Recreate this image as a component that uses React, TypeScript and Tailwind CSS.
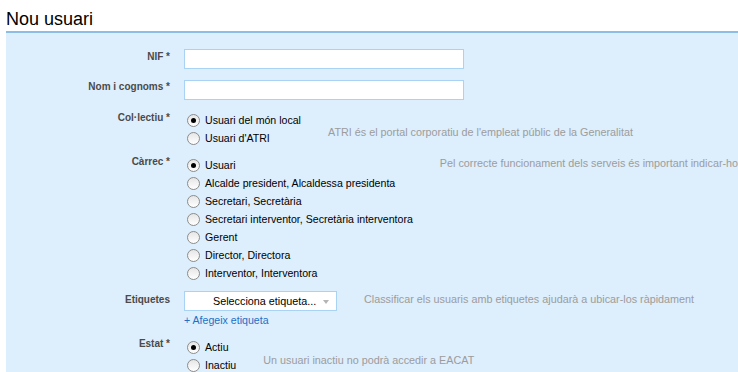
import React from 'react';

type Option = { label: string; checked?: boolean };

function Radio({ label, checked }: Option) {
  return (
    <div className="flex h-[18px] items-center whitespace-nowrap">
      <span className="ml-[3px] flex h-[13px] w-[13px] items-center justify-center rounded-full border border-[#8c8c8c] bg-gradient-to-b from-[#e6e6e6] to-white">
        {checked && <span className="h-[5px] w-[5px] rounded-full bg-black" />}
      </span>
      <span className="ml-[5px] text-[10.6px] leading-[14px] text-black">{label}</span>
    </div>
  );
}

function Label({ text, pad }: { text: string; pad: string }) {
  return (
    <div className={`w-[164px] shrink-0 text-right text-[10px] font-bold leading-[12px] text-[#4a4a4a] ${pad}`}>
      {text}
    </div>
  );
}

function Help({ text, mt }: { text: string; mt: string }) {
  return (
    <div className={`ml-[27px] whitespace-nowrap text-[10.8px] leading-[14px] text-[#9c9c9c] ${mt}`}>{text}</div>
  );
}

export default function App() {
  const carrecs: Option[] = [
    { label: 'Usuari', checked: true },
    { label: 'Alcalde president, Alcaldessa presidenta' },
    { label: 'Secretari, Secretària' },
    { label: 'Secretari interventor, Secretària interventora' },
    { label: 'Gerent' },
    { label: 'Director, Directora' },
    { label: 'Interventor, Interventora' },
  ];

  return (
    <div className="h-[372px] w-[738px] overflow-hidden bg-white font-['Liberation_Sans',Arial,sans-serif]">
      <h1 className="h-[31px] pl-[6px] pt-[9px] text-[18px] font-normal leading-[20px] text-black">Nou usuari</h1>

      <div className="ml-[6px] h-[341px] overflow-hidden border-t-2 border-[#8dbde5] bg-[#ddeefd] pt-[16px]">
        {/* NIF */}
        <div className="flex gap-[14px]">
          <Label text="NIF *" pad="pt-[2px]" />
          <div className="h-[20px] w-[280px] border border-[#a9d3f4] bg-white" />
        </div>

        {/* Nom */}
        <div className="mt-[11px] flex gap-[14px]">
          <Label text="Nom i cognoms *" pad="pt-[1px]" />
          <div className="h-[20px] w-[280px] border border-[#a9d3f4] bg-white" />
        </div>

        {/* Col·lectiu */}
        <div className="mt-[11px] flex">
          <Label text="Col·lectiu *" pad="pt-[1px]" />
          <div className="ml-[14px] flex flex-col">
            <Radio label="Usuari del món local" checked />
            <Radio label="Usuari d'ATRI" />
          </div>
          <Help text="ATRI és el portal corporatiu de l'empleat públic de la Generalitat" mt="mt-[14px]" />
        </div>

        {/* Càrrec */}
        <div className="mt-[9px] flex">
          <Label text="Càrrec *" pad="pt-0" />
          <div className="ml-[14px] flex flex-col">
            {carrecs.map((c) => (
              <Radio key={c.label} label={c.label} checked={c.checked} />
            ))}
          </div>
          <Help text="Pel correcte funcionament dels serveis és important indicar-ho i" mt="mt-0" />
        </div>

        {/* Etiquetes */}
        <div className="mt-[9px] flex">
          <Label text="Etiquetes" pad="pt-[3px]" />
          <div className="ml-[14px] flex flex-col">
            <div className="relative flex h-[20px] w-[153px] items-center border border-[#a9d3f4] bg-white pl-[28px]">
              <span className="text-[10.8px] leading-[14px] text-black">Selecciona etiqueta...</span>
              <span className="absolute right-[7px] top-[8px] h-0 w-0 border-x-[3px] border-t-[4px] border-x-transparent border-t-[#b5b5b5]" />
            </div>
            <span className="mt-[2px] text-[10.6px] leading-[14px] text-[#2170c6]">+ Afegeix etiqueta</span>
          </div>
          <Help text="Classificar els usuaris amb etiquetes ajudarà a ubicar-los ràpidament" mt="mt-[1px]" />
        </div>

        {/* Estat */}
        <div className="mt-[11px] flex">
          <Label text="Estat *" pad="pt-0" />
          <div className="ml-[14px] flex flex-col">
            <Radio label="Actiu" checked />
            <Radio label="Inactiu" />
          </div>
          <Help text="Un usuari inactiu no podrà accedir a EACAT" mt="mt-[15px]" />
        </div>
      </div>
    </div>
  );
}
